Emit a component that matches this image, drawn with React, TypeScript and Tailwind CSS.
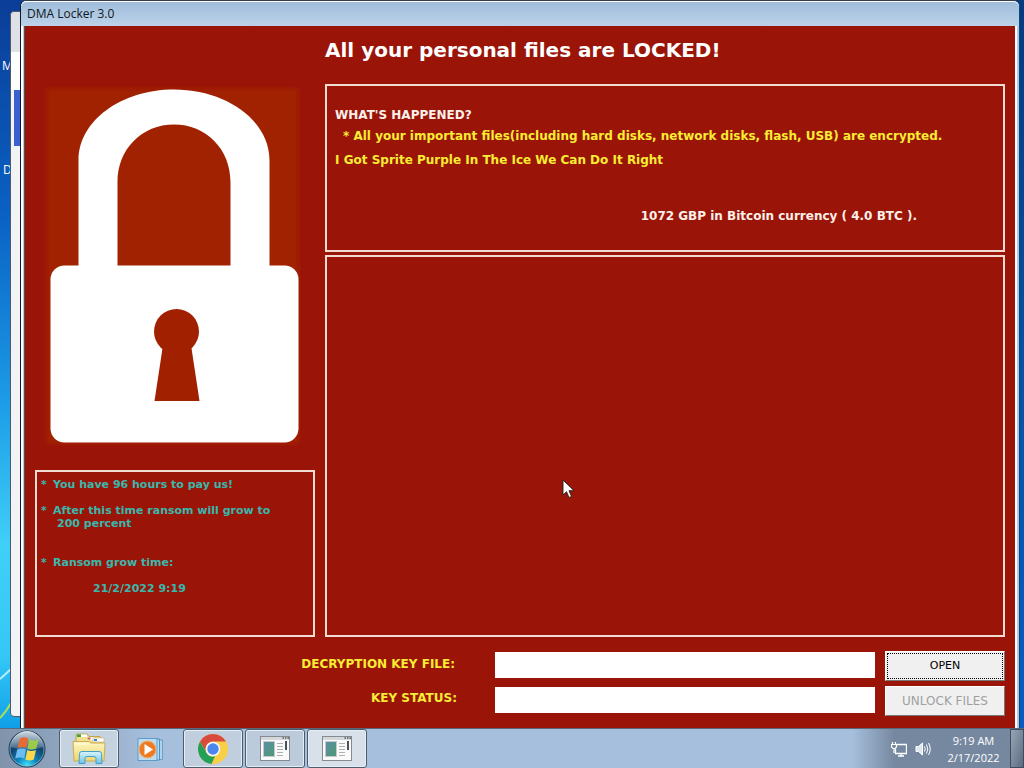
import React from "react";

function Desktop() {
  return (
    <svg className="absolute inset-0 h-full w-full" preserveAspectRatio="none" viewBox="0 0 1024 728" aria-hidden="true">
      <defs>
        <linearGradient id="sky" x1="0" y1="0" x2="0" y2="1">
          <stop offset="0" stopColor="#0b3d97" />
          <stop offset="0.3" stopColor="#0a62c4" />
          <stop offset="0.55" stopColor="#1c9be6" />
          <stop offset="0.75" stopColor="#3fd0f8" />
          <stop offset="0.9" stopColor="#35c8f6" />
          <stop offset="1" stopColor="#0f9fe8" />
        </linearGradient>
        <linearGradient id="skyRight" x1="0" y1="0" x2="0" y2="1">
          <stop offset="0" stopColor="#053a80" />
          <stop offset="0.5" stopColor="#0652a4" />
          <stop offset="1" stopColor="#0a5cc4" />
        </linearGradient>
      </defs>
      <rect width="512" height="728" fill="url(#sky)" />
      <rect x="512" width="512" height="728" fill="url(#skyRight)" />
      <path d="M0 679 L11 669" stroke="#b9effc" strokeWidth="2" />
      <path d="M0 718 Q6 712 11 703" stroke="#a8e05a" strokeWidth="2" fill="none" />
    </svg>
  );
}

function Padlock() {
  return (
    <svg viewBox="0 0 258 362" className="block w-full" role="img" aria-label="Padlock">
      <defs>
        <filter id="soft" x="-5%" y="-5%" width="110%" height="110%">
          <feGaussianBlur stdDeviation="2" />
        </filter>
      </defs>
      <rect x="2" y="3" width="253" height="356" fill="#a02000" filter="url(#soft)" />
      <path
        fillRule="evenodd"
        fill="#fff"
        d="M34.500 181 V75 C34.500 36 77 4.500 130 4.500 C183 4.500 225.500 36 225.500 75 V181 Z M73.500 181 V97 C73.500 64 98 39.500 130 39.500 C162 39.500 186.500 64 186.500 97 V181 Z"
      />
      <rect x="6.500" y="180.500" width="248" height="177" rx="14" fill="#fff" />
      <circle cx="132.500" cy="246.500" r="22.500" fill="#a02000" />
      <path d="M119 260 L110.500 316 H155.500 L147 260 Z" fill="#a02000" />
    </svg>
  );
}

function StartOrb() {
  return (
    <svg viewBox="0 0 38 38" className="size-[38px]" aria-hidden="true">
      <defs>
        <radialGradient id="orb" cx="0.5" cy="0.95" r="0.9">
          <stop offset="0" stopColor="#3fe0fb" />
          <stop offset="0.3" stopColor="#0e86bd" />
          <stop offset="0.65" stopColor="#11426c" />
          <stop offset="1" stopColor="#4d7290" />
        </radialGradient>
        <linearGradient id="gloss" x1="0" y1="0" x2="0" y2="1">
          <stop offset="0" stopColor="#fff" stopOpacity="0.7" />
          <stop offset="1" stopColor="#fff" stopOpacity="0.15" />
        </linearGradient>
      </defs>
      <circle cx="19" cy="19" r="18" fill="url(#orb)" stroke="#26394c" />
      <circle cx="19" cy="19" r="17" fill="none" stroke="#a9c6dc" strokeOpacity="0.6" />
      <path d="M3 17 A16 16 0 0 1 35 17 Q19 23 3 17 Z" fill="url(#gloss)" />
      <path d="M12 8.500 Q16 6 20 8.500 L18.300 18 Q14.500 16 9.500 18 Z" fill="#ea6a34" />
      <path d="M21.300 9 Q25 11.500 30.500 9.500 L28.300 18.500 Q23.500 20.500 19.400 18.500 Z" fill="#9ccb4b" />
      <path d="M9.200 19.500 Q14 17.500 18 19.500 L16.200 28.500 Q12.500 26.500 7.200 28.500 Z" fill="#6bbdf2" />
      <path d="M19.200 20 Q23 22 28 20 L25.800 29.500 Q21.500 31.500 17.400 29.500 Z" fill="#fbd74c" />
    </svg>
  );
}

function FolderIcon() {
  return (
    <svg viewBox="0 0 36 32" className="h-8 w-9" aria-hidden="true">
      <defs>
        <linearGradient id="fold" x1="0" y1="0" x2="0" y2="1">
          <stop offset="0" stopColor="#fdf6c0" />
          <stop offset="1" stopColor="#edd672" />
        </linearGradient>
        <linearGradient id="stand" x1="0" y1="0" x2="0" y2="1">
          <stop offset="0" stopColor="#d8f4fc" />
          <stop offset="1" stopColor="#6cc3e8" />
        </linearGradient>
      </defs>
      <path d="M5 2 Q5 1 6 1 H16 L18 3.500 H29 V13 H5 Z" fill="#f2df8e" stroke="#c0a446" />
      <rect x="6" y="1.500" width="4" height="2.500" fill="#35a447" />
      <rect x="10" y="1.500" width="6" height="2.500" fill="#fff" />
      <rect x="16" y="4" width="7" height="3" fill="#fff" />
      <rect x="16.500" y="4.500" width="3" height="2" fill="#c8584a" />
      <rect x="22" y="5" width="11" height="4" fill="#fff" stroke="#c4b272" strokeWidth="0.600" />
      <rect x="23" y="6" width="3" height="2" fill="#3c7fd0" />
      <path d="M2 8.500 H18 L20 10 H34 L33 28 H3 Z" fill="url(#fold)" stroke="#c9ae54" />
      <path d="M4 11 H18" stroke="#fffbe2" />
      <path d="M8 30.500 L8.500 20.500 Q8.500 18.500 11 18.500 H28 Q30.500 18.500 30.500 20.500 L31 30.500 H25 V25.500 Q25 23.500 23 23.500 H16 Q14 23.500 14 25.500 V30.500 Z" fill="url(#stand)" stroke="#459fc9" />
    </svg>
  );
}

function MediaIcon() {
  return (
    <svg viewBox="0 0 28 26" className="h-[26px] w-7" aria-hidden="true">
      <path d="M20 4 H25.500 V23.500 H20 Z" fill="#b0d2ea" stroke="#5a96c2" strokeWidth="0.800" />
      <path d="M18 3 H22.500 V24 H18 Z" fill="#b9dcf2" stroke="#4c8fc0" />
      <rect x="1" y="2.500" width="19" height="22" fill="#bcdcf0" stroke="#5b9bc8" />
      <circle cx="10.500" cy="13.500" r="8.500" fill="#ed7a24" stroke="#f8b06a" />
      <path d="M7.500 8 L16 13.500 L7.500 19 Z" fill="#fff" />
    </svg>
  );
}

function ChromeIcon() {
  return (
    <svg viewBox="0 0 32 32" className="size-8" aria-hidden="true">
      <circle cx="16" cy="16" r="15" fill="#f9cf45" />
      <path d="M3 8.500 A15 15 0 0 1 29 8.500 H16 A7.500 7.500 0 0 0 9.500 19.700 Z" fill="#d94b3d" />
      <path d="M3 8.500 L9.500 19.700 A7.500 7.500 0 0 0 18 23.300 L14.500 31 A15 15 0 0 1 3 8.500 Z" fill="#22a05a" />
      <circle cx="16" cy="16" r="7.300" fill="#f4f6f8" />
      <circle cx="16" cy="16" r="5.700" fill="#4a86ec" />
    </svg>
  );
}

function AppIcon() {
  return (
    <svg viewBox="0 0 32 28" className="h-7 w-8" aria-hidden="true">
      <defs>
        <linearGradient id="pane" x1="0" y1="0" x2="1" y2="1">
          <stop offset="0" stopColor="#5e8fa8" />
          <stop offset="1" stopColor="#4c9a70" />
        </linearGradient>
      </defs>
      <rect x="1.500" y="1.500" width="29" height="24" fill="#fafafa" stroke="#858a8e" />
      <path d="M2 3.500 H30" stroke="#d4d8da" strokeWidth="3" />
      <path d="M23.500 3 H25 M26 3 H27.500 M28.500 3 H30" stroke="#50565b" strokeWidth="1.500" />
      <rect x="4.500" y="6.500" width="11" height="15" fill="url(#pane)" stroke="#c3c9cc" />
      <path d="M18 8.500 H24 M18 11.500 H24 M18 14.500 H24 M18 17.500 H24 M18 20.500 H24" stroke="#b3aeb0" />
      <rect x="26" y="6" width="2" height="9" fill="#48525a" />
    </svg>
  );
}

const taskButton = "flex h-[39px] w-[60px] items-center justify-center rounded-[3px] border border-[#4d5b6b] shadow-[inset_0_0_0_1px_#e5edf5]";
const frame = "border-2 border-[#f0dcd2]";
const box = "mt-px h-[26px] w-full min-w-0 bg-white px-1 text-xs text-black outline-none";
const action = "h-[30px] border border-white border-r-[#777] border-b-[#777] bg-[#f0f0f0] font-normal";

function Note({ children }: { children: React.ReactNode }) {
  return (
    <p className="flex">
      <span className="w-3">*</span>
      <span>{children}</span>
    </p>
  );
}

function Locker() {
  return (
    <section className="absolute top-0 right-[4px] bottom-0 left-[20px] flex flex-col rounded-t-md border-x border-t border-t-[#333c48] border-r-[#0c4a78] border-l-[#0c1824] bg-[#b2cae2] shadow-[inset_2px_0_0_#fff]">
      <header className="flex h-[25px] shrink-0 items-center rounded-t-md border-t border-white bg-linear-to-b from-[#a0bddc] to-[#bcd2e8] px-[6px] font-['Open_Sans',sans-serif] text-[12px] text-[#101820]">
        DMA Locker 3.0
      </header>
      <main className="mr-1 ml-[3px] flex grow flex-col border-l border-[#545054] bg-[#9a1408] px-[10px] font-['DejaVu_Sans',Verdana,sans-serif] font-bold shadow-[2px_0_0_#fff]">
        <div className="grid grow grid-cols-[280px_minmax(0,1fr)] gap-x-[10px]">
          <div className="flex flex-col justify-between">
            <div className="mt-[59px] pr-[13px] pl-[9px]">
              <Padlock />
            </div>
            <div className={`${frame} h-[167px] px-1 pt-[6px] text-[11px] leading-[13px] text-[#38b8ac]`}>
              <div className="space-y-[13px]">
                <Note>You have 96 hours to pay us!</Note>
                <Note>After this time ransom will grow to</Note>
              </div>
              <p className="pl-4">200 percent</p>
              <div className="mt-[26px] space-y-[13px]">
                <Note>Ransom grow time:</Note>
                <p className="pl-[52px]">21/2/2022 9:19</p>
              </div>
            </div>
          </div>
          <div className="flex flex-col">
            <h1 className="h-[58px] pt-[10px] text-[20px] leading-[28px] text-white">All your personal files are LOCKED!</h1>
            <div className={`${frame} h-[168px] px-2 pt-5 text-[12px] leading-[18px] text-[#f8ec34]`}>
              <p className="text-[#fcf0ea]">WHAT'S HAPPENED?</p>
              <p className="mt-[3px] pl-2">* All your important files(including hard disks, network disks, flash, USB) are encrypted.</p>
              <p className="mt-[6px]">I Got Sprite Purple In The Ice We Can Do It Right</p>
              <p className="mt-[38px] pr-[78px] text-right text-[#fcf0ea]">1072 GBP in Bitcoin currency ( 4.0 BTC ).</p>
            </div>
            <div className={`${frame} mt-[3px] grow`} />
          </div>
        </div>
        <form className="grid grid-cols-[450px_minmax(0,1fr)_120px] gap-x-[10px] gap-y-[5px] pt-[14px] pb-[12px] text-[12px] text-[#f8ec34]">
          <label htmlFor="key" className="pt-[4px] pr-[30px] text-right">DECRYPTION KEY FILE:</label>
          <input id="key" className={box} />
          <button type="button" className={`${action} p-px text-[11px] text-black`}>
            <span className="flex h-full items-center justify-center border border-dotted border-black">OPEN</span>
          </button>
          <label htmlFor="status" className="pt-[3px] pr-7 text-right">KEY STATUS:</label>
          <input id="status" className={box} />
          <button type="button" disabled className={`${action} text-[12px] text-[#a0a0a0]`}>UNLOCK FILES</button>
        </form>
      </main>
    </section>
  );
}

function Taskbar() {
  return (
    <nav className="flex h-10 shrink-0 items-center border-t border-[#59677a] bg-linear-to-r from-[#8093ab] from-0% via-[#a6bfdc] via-15% to-[#a6bfdc]">
      <button type="button" aria-label="Start" className="mr-[13px] ml-2"><StartOrb /></button>
      <button type="button" aria-label="Windows Explorer" className={`${taskButton} bg-[#c5d2df]`}><FolderIcon /></button>
      <button type="button" aria-label="Media Player" className="flex h-full w-16 items-center justify-center"><MediaIcon /></button>
      <div className="flex grow gap-[2px]">
        <button type="button" aria-label="Chrome" className={`${taskButton} bg-[#c0cedd]`}><ChromeIcon /></button>
        <button type="button" aria-label="Application" className={`${taskButton} bg-[#bccbdc]`}><AppIcon /></button>
        <button type="button" aria-label="DMA Locker" className={`${taskButton} bg-[#d8e1ea]`}><AppIcon /></button>
      </div>
      <div className="flex h-full w-[172px] items-center bg-linear-to-r from-[#a6bfdc] to-[#7688a0] to-25%">
        <svg viewBox="0 0 16 16" className="ml-[39px] size-4" fill="none" stroke="#fff" aria-label="Network">
          <path d="M6 3.500 H15.500 V12.500 H4.500 V8 M7 15 H13 M10 13 V15" strokeWidth="1.300" />
          <path d="M1.500 1 V4 M4.500 1 V4 M0.500 3.500 H5.500 V6 L4 7.500 H2 L0.500 6 Z M3 8 V12" strokeWidth="1.200" />
        </svg>
        <svg viewBox="0 0 16 16" className="ml-2 size-4" fill="none" stroke="#fff" aria-label="Volume">
          <path d="M1 5.500 H3.500 L7.500 2 V14 L3.500 10.500 H1 Z" fill="#dfe7ee" />
          <path d="M9.500 5.500 Q11 8 9.500 10.500 M11.500 3.500 Q14 8 11.500 12.500 M13.500 2 Q17 8 13.500 14" />
        </svg>
        <div className="grow pl-[6px] text-center font-['Open_Sans',sans-serif] text-[11px] leading-[17px] text-white">
          <div>9:19 AM</div>
          <div>2/17/2022</div>
        </div>
        <button type="button" aria-label="Show desktop" className="h-full w-[14px] border border-[#3d4c5e] bg-linear-to-br from-[#98a5b6] to-[#5c6c80]" />
      </div>
    </nav>
  );
}

export default function App() {
  return (
    <div className="flex h-screen flex-col overflow-hidden">
      <div className="relative grow overflow-hidden">
        <Desktop />
        <span className="absolute top-[58px] left-[2px] font-['Open_Sans',sans-serif] text-[12px] leading-4 text-white">M</span>
        <span className="absolute top-[162px] left-[3px] font-['Open_Sans',sans-serif] text-[12px] leading-4 text-white">D</span>
        <div className="absolute top-[11px] bottom-[11px] left-[10px] w-10 rounded border border-[#505a66] bg-[#f2f3f7]">
          <div className="h-10 rounded-t bg-[#dfe1e7]" />
          <div className="h-[38px] bg-white" />
          <div className="ml-[3px] h-14 bg-[#3b5fd0]" />
        </div>
        <Locker />
        <svg viewBox="0 0 13 20" className="absolute top-[479px] left-[562px] h-5 w-[13px]" aria-hidden="true">
          <path d="M1 1 V16 L4.500 12.700 L7 18.500 L9.500 17.400 L7 11.700 H12 Z" fill="#fff" stroke="#202020" strokeWidth="0.900" />
        </svg>
      </div>
      <Taskbar />
    </div>
  );
}
